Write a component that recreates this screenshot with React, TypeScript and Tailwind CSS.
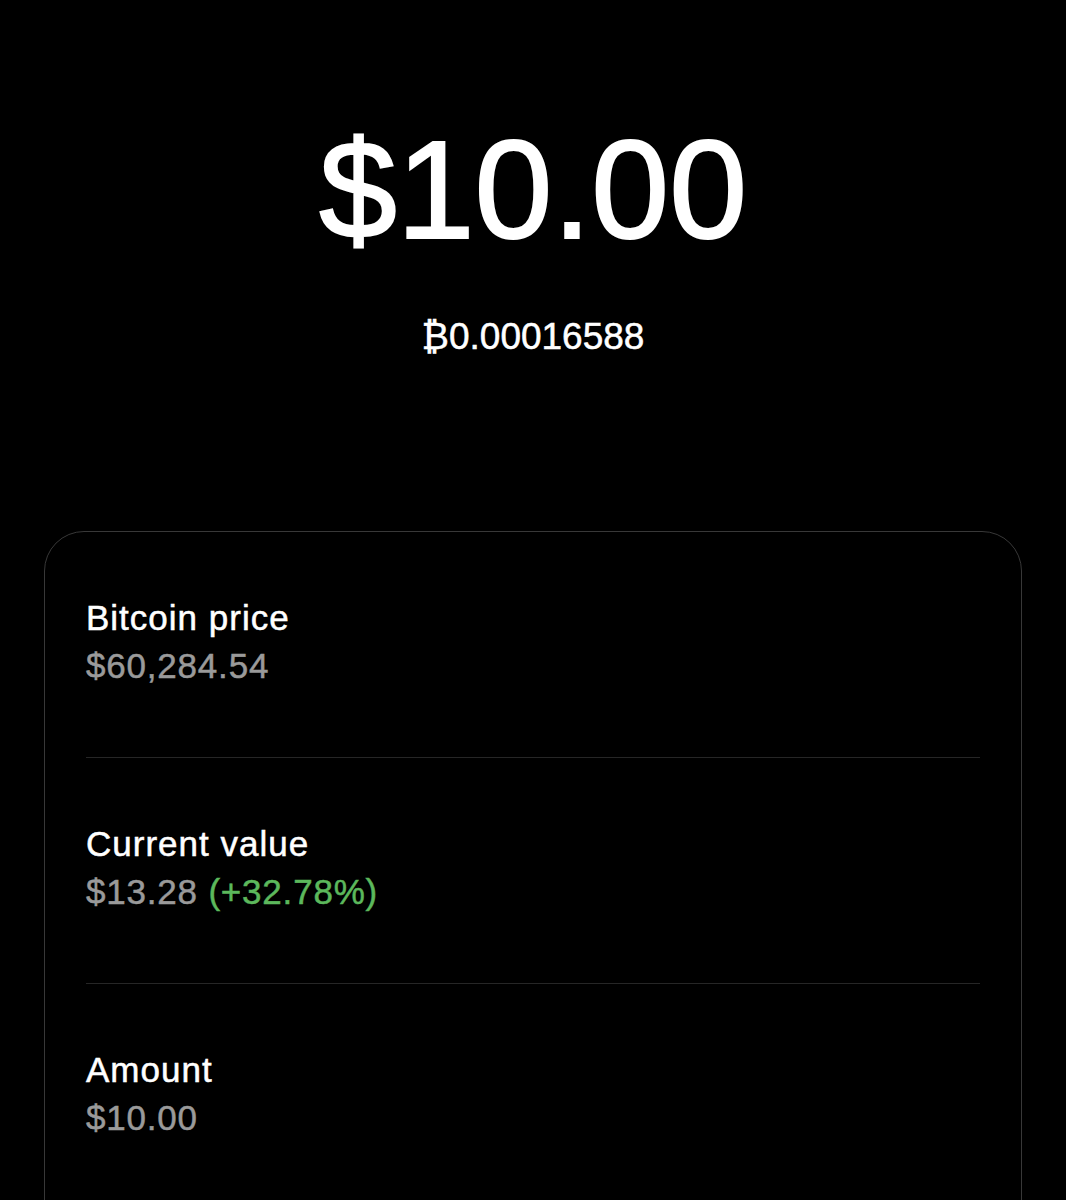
import React from "react";

const rows = [
  { label: "Bitcoin price", value: "$60,284.54", change: null as string | null },
  { label: "Current value", value: "$13.28", change: "(+32.78%)" },
  { label: "Amount", value: "$10.00", change: null as string | null },
];

export default function App() {
  return (
    <div
      className="min-h-[1200px] w-full bg-black text-white overflow-hidden"
      style={{ fontFamily: '"Liberation Sans", "Noto Sans", "DejaVu Sans", sans-serif' }}
    >
      <div className="flex flex-col items-center pt-[120px]">
        <div className="text-[140px] leading-[140px] text-white [-webkit-text-stroke:2px_white]">$10.00</div>
        <div className="mt-[55px] text-[37px] leading-[44px] text-white [-webkit-text-stroke:0.5px_white]">₿0.00016588</div>
      </div>
      <div className="mx-[44px] mt-[172px] rounded-[40px] border border-[#383838] px-[41px] pb-[80px]">
        {rows.map((r, i) => (
          <div
            key={r.label}
            className={
              i === 0
                ? "pt-[62px] pb-[67px]"
                : "pt-[62px] pb-[67px] border-t border-[#262626]"
            }
          >
            <div className="text-[35px] leading-[48px] tracking-[1px] text-white [-webkit-text-stroke:0.5px_currentColor]">
              {r.label}
            </div>
            <div className="text-[35px] leading-[48px] tracking-[0.8px] text-[#9a9a9a] [-webkit-text-stroke:0.5px_currentColor]">
              {r.value}
              {r.change && <span className="text-[#5cb85c]"> {r.change}</span>}
            </div>
          </div>
        ))}
      </div>
    </div>
  );
}
